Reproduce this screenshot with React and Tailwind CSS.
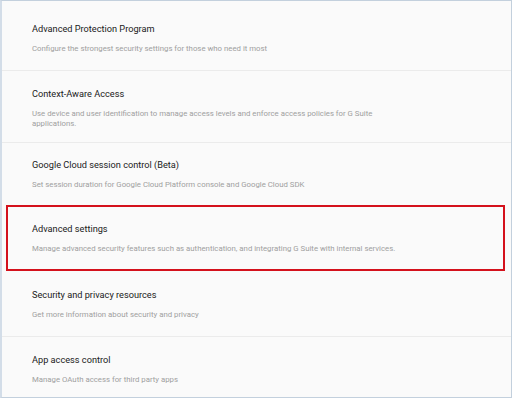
const rows = [
  {
    title: "Advanced Protection Program",
    desc: "Configure the strongest security settings for those who need it most",
    pad: "pt-[21px] pb-[16px]",
  },
  {
    title: "Context-Aware Access",
    desc: "Use device and user identification to manage access levels and enforce access policies for G Suite applications.",
    pad: "pt-[16px] pb-[13px]",
  },
  {
    title: "Google Cloud session control (Beta)",
    desc: "Set session duration for Google Cloud Platform console and Google Cloud SDK",
    pad: "pt-[15px] pb-[16px]",
  },
  {
    title: "Advanced settings",
    desc: "Manage advanced security features such as authentication, and integrating G Suite with internal services.",
    highlight: true,
  },
  {
    title: "Security and privacy resources",
    desc: "Get more information about security and privacy",
    pad: "pt-[17px] pb-[16px]",
  },
  {
    title: "App access control",
    desc: "Manage OAuth access for third party apps",
    pad: "pt-[16px] pb-[16px]",
  },
];

function Text({ title, desc }) {
  return (
    <>
      <div className="text-[9.2px] leading-[14px] text-[#212121]">{title}</div>
      <div className="mt-[8px] text-[7.8px] leading-[10px] text-[#a0a0a0]">{desc}</div>
    </>
  );
}

export default function App() {
  return (
    <div
      className="w-[512px] h-[398px] overflow-hidden bg-[#fafafa] border border-[#c3d0dd] border-l-2 border-l-[#d3dde8]"
      style={{ fontFamily: "Roboto, 'Liberation Sans', sans-serif" }}
    >
      {rows.map((r, i) =>
        r.highlight ? (
          <div key={i} className="pl-[4px] pr-[6px]">
            <div className="border-2 border-[#d4111c] -mt-px">
              <div className="pl-[24px] pr-[90px] pt-[15px] pb-[15px]">
                <Text {...r} />
              </div>
            </div>
          </div>
        ) : (
          <div
            key={i}
            className={`pl-[30px] pr-[100px] ${r.pad} ${
              i < rows.length - 1 && !rows[i + 1].highlight ? "border-b border-[#ebebeb]" : ""
            }`}
          >
            <Text {...r} />
          </div>
        )
      )}
    </div>
  );
}
